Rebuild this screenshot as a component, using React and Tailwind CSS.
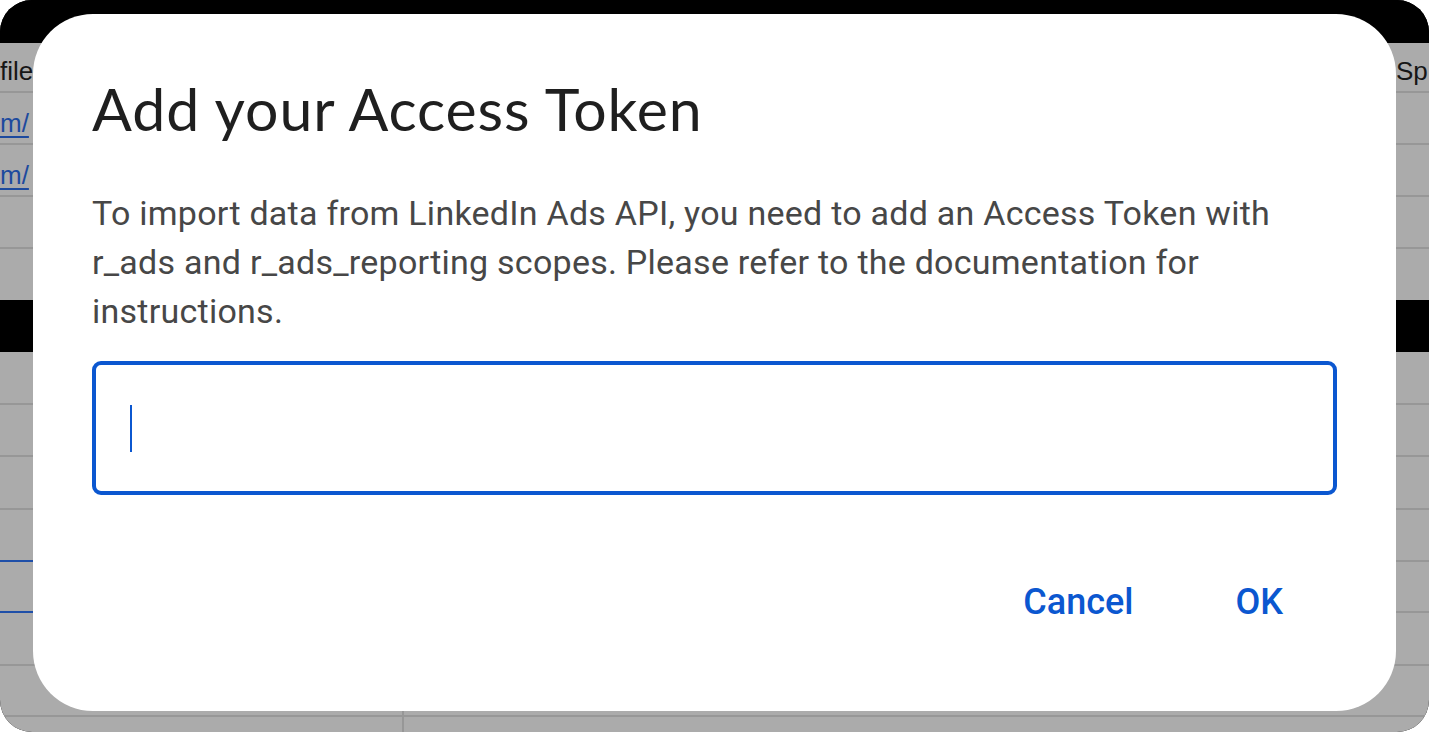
import React from "react";

const cellText = "font-['Liberation_Sans',Arial,sans-serif] text-[26px] leading-none";

function Row({ h = "h-[52px]", left = null, right = null, blue = false, last = false }) {
  return (
    <div className={`flex shrink-0 ${h}`}>
      <div
        className={`w-[404px] shrink-0 border-r-2 border-r-[#979797] ${
          last ? "" : blue ? "border-b-2 border-b-[#1f4fa8]" : "border-b-2 border-b-[#979797]"
        } flex items-end pb-[7px] overflow-hidden`}
      >
        {left}
      </div>
      <div
        className={`flex-1 ${last ? "" : "border-b-2 border-b-[#979797]"} flex items-end pb-[7px] justify-end overflow-hidden`}
      >
        {right}
      </div>
    </div>
  );
}

export default function App() {
  return (
    <div className="w-[1429px] h-[732px] bg-white">
      <div className="relative w-full h-full rounded-[32px] overflow-hidden bg-black flex flex-col">
        <div className="h-[43px] shrink-0 bg-black" />
        <div className="bg-[#ababab] flex flex-col shrink-0">
          <Row
            h="h-[50px]"
            left={<span className={`${cellText} text-[#161616]`}>file</span>}
            right={<span className={`${cellText} text-[#161616] w-[34px] pl-[1px] whitespace-nowrap`}>Sp</span>}
          />
          <Row
            h="h-[52px]"
            left={<span className={`${cellText} text-[#1d4a9e] underline underline-offset-[4px]`}>m/</span>}
          />
          <Row
            h="h-[52px]"
            left={<span className={`${cellText} text-[#1d4a9e] underline underline-offset-[4px]`}>m/</span>}
          />
          <Row h="h-[52px]" />
          <Row h="h-[51px]" last />
        </div>
        <div className="h-[52px] shrink-0 bg-black" />
        <div className="bg-[#ababab] flex flex-col flex-1">
          <Row h="h-[53px]" />
          <Row h="h-[52px]" />
          <Row h="h-[53px]" />
          <Row h="h-[52px]" blue />
          <Row h="h-[51px]" blue />
          <Row h="h-[53px]" />
          <Row h="h-[51px]" />
          <Row h="h-[20px]" last />
        </div>

        {/* Dialog overlay */}
        <div className="absolute left-[33px] top-[14px] w-[1363px] h-[697px] rounded-[60px] bg-white flex flex-col pl-[59px] pr-[59px] pt-[60px]">
          <h1 className="font-['Lato','Open_Sans',sans-serif] text-[59px] leading-[70px] text-[#1f1f1f] font-normal tracking-[0.9px]">
            Add your Access Token
          </h1>
          <p className="mt-[45px] font-['Roboto',sans-serif] text-[34px] leading-[49px] tracking-[0.25px] text-[#474747]">
            To import data from LinkedIn Ads API, you need to add an Access Token with r_ads and r_ads_reporting
            scopes. Please refer to the documentation for instructions.
          </p>
          <div className="mt-[25px] h-[134px] shrink-0 rounded-[9px] border-[4px] border-[#0b57d0] flex items-center pl-[34px]">
            <span className="block w-[2px] h-[47px] bg-[#0b57d0]" />
          </div>
          <div className="mt-[87px] flex justify-end pr-[2px]">
            <button className="pl-[52px] pr-[50px] font-['Roboto',sans-serif] font-medium text-[36px] leading-[40px] text-[#0b57d0]">
              Cancel
            </button>
            <button className="px-[52px] font-['Roboto',sans-serif] font-medium text-[36px] leading-[40px] text-[#0b57d0]">
              OK
            </button>
          </div>
        </div>
      </div>
    </div>
  );
}
